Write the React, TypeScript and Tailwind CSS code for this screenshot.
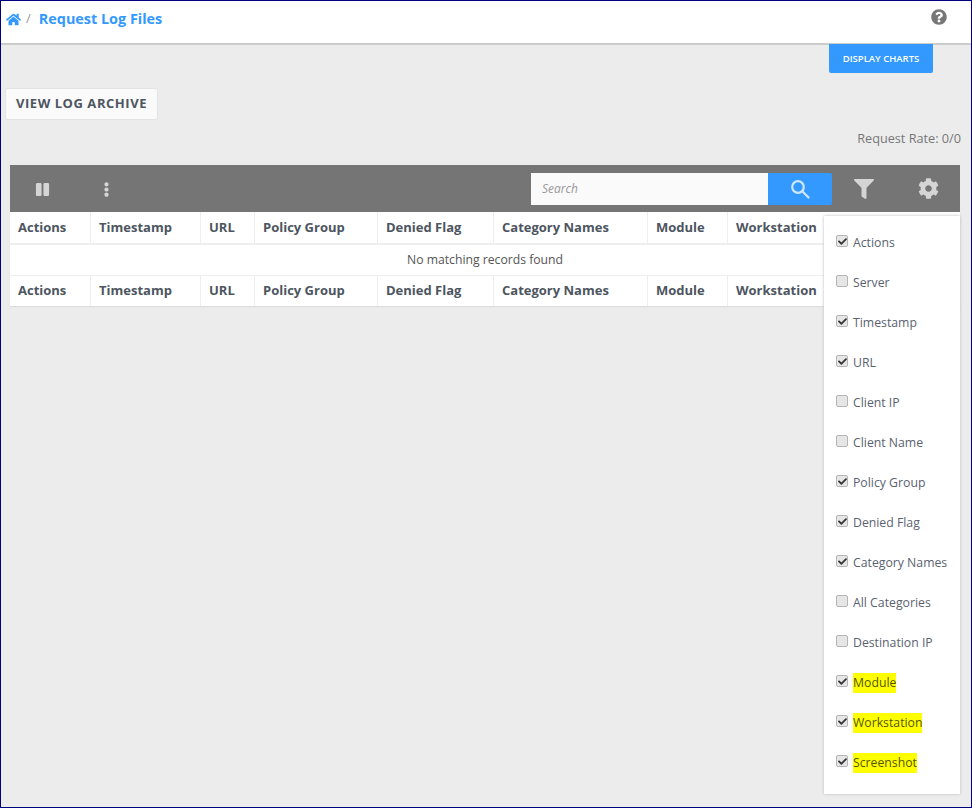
import { FaHome, FaQuestionCircle, FaPause, FaEllipsisV, FaFilter, FaCog, FaCheck } from "react-icons/fa";

const columns = [
  { name: "Actions", width: "w-[81px]" },
  { name: "Timestamp", width: "w-[110px]" },
  { name: "URL", width: "w-[54px]" },
  { name: "Policy Group", width: "w-[123px]" },
  { name: "Denied Flag", width: "w-[116px]" },
  { name: "Category Names", width: "w-[154px]" },
  { name: "Module", width: "w-[80px]" },
  { name: "Workstation", width: "w-[232px]" },
];

const options = [
  { name: "Actions", checked: true },
  { name: "Server", checked: false },
  { name: "Timestamp", checked: true },
  { name: "URL", checked: true },
  { name: "Client IP", checked: false },
  { name: "Client Name", checked: false },
  { name: "Policy Group", checked: true },
  { name: "Denied Flag", checked: true },
  { name: "Category Names", checked: true },
  { name: "All Categories", checked: false },
  { name: "Destination IP", checked: false },
  { name: "Module", checked: true, marked: true },
  { name: "Workstation", checked: true, marked: true },
  { name: "Screenshot", checked: true, marked: true },
];

const HeaderRow = ({ className, textClass }: { className: string; textClass: string }) => (
  <div className={`flex ${className}`}>
    {columns.map((col, i) => (
      <div
        key={col.name}
        className={`${col.width} flex items-center pl-2 text-[13px] font-bold text-[#4d5560] ${textClass} ${
          i < columns.length - 1 ? "border-r border-[#eeeeee]" : ""
        }`}
      >
        {col.name}
      </div>
    ))}
  </div>
);

const App = () => {
  return (
    <div className="h-[808px] w-[972px] overflow-hidden border border-[#000080] bg-[#ececec] font-['Open_Sans',sans-serif]">
      <div className="flex h-[44px] items-center border-b-2 border-[#cccccc] bg-white pb-[6px] pl-[5px] pr-[24px]">
        <FaHome className="text-[15px] text-[#3399ff]" />
        <span className="ml-[5px] text-[13px] text-[#999999]">/</span>
        <span className="ml-[8px] text-[14.4px] font-bold text-[#3399ff]">Request Log Files</span>
        <FaQuestionCircle className="relative -top-[2px] ml-auto text-[16px] text-[#777777]" />
      </div>

      <div className="-mt-[1px] flex justify-end pr-[38px]">
        <button className="relative h-[29px] w-[104px] rounded-b-[2px] bg-[#3399ff] pt-[1px] text-[9.5px] font-semibold text-white">
          DISPLAY CHARTS
        </button>
      </div>

      <div className="pl-[4px] pt-[15px]">
        <button className="h-[32px] w-[153px] rounded-[2px] border border-[#e3e3e3] bg-[#fafafa] text-[13px] font-bold tracking-[0.55px] text-[#4d5560]">
          VIEW LOG ARCHIVE
        </button>
      </div>

      <div className="flex justify-end pr-[10px] pt-[9px] text-[12.7px] leading-[18px] text-[#777777]">
        Request Rate: 0/0
      </div>

      <div className="relative ml-[9px] mt-[18px] w-[950px]">
        <div className="flex h-[47px] items-center bg-[#757575] pl-[25px]">
          <FaPause className="relative top-[1px] text-[15px] text-[#d5d5d5]" />
          <FaEllipsisV className="relative top-[1px] ml-[49px] text-[15px] text-[#d5d5d5]" />
          <div className="ml-[417px] flex h-[32px] w-[237px] items-center bg-[#fafafa] pl-[11px] pt-[1px] text-[12px] italic text-[#999999]">
            Search
          </div>
          <div className="flex h-[32px] w-[64px] items-center justify-center rounded-r-[2px] bg-[#3399ff]">
            <svg viewBox="0 0 20 20" className="h-[20px] w-[20px] fill-none stroke-[#cfe6ff] stroke-[2.2]">
              <circle cx="8" cy="8" r="5.8" />
              <path d="M12.3 12.3 18.5 18.5" strokeLinecap="round" />
            </svg>
          </div>
          <FaFilter className="ml-[22px] text-[20px] text-[#d5d5d5]" />
          <FaCog className="ml-[44px] text-[21px] text-[#d5d5d5]" />
        </div>

        <div className="bg-white shadow-[0_1px_1px_#dddddd]">
          <HeaderRow className="h-[33px] border-b-2 border-[#eeeeee]" textClass="pt-[1px]" />
          <div className="flex h-[31px] items-center justify-center border-b border-[#eeeeee] text-[12.2px] text-[#555555]">
            No matching records found
          </div>
          <HeaderRow className="h-[30px]" textClass="" />
        </div>

        <div className="absolute left-[814px] top-[51px] w-[136px] bg-white pb-[11px] pl-[12px] pt-[7px] shadow-[0_0_3px_#bbbbbb]">
          {options.map((opt) => (
            <div key={opt.name} className="flex h-[40px] items-center gap-[5px]">
              <span className="relative -top-[2px] flex h-[12px] w-[12px] items-center justify-center rounded-[2px] border border-[#b5b5b5] bg-[#e6e6e6]">
                {opt.checked && <FaCheck className="text-[9px] text-[#333333]" />}
              </span>
              <span className={`text-[12.25px] text-[#5a6270] ${opt.marked ? "bg-[#ffff00] py-[1px] text-[#555500]" : ""}`}>
                {opt.name}
              </span>
            </div>
          ))}
        </div>
      </div>
    </div>
  );
};

export default App;
